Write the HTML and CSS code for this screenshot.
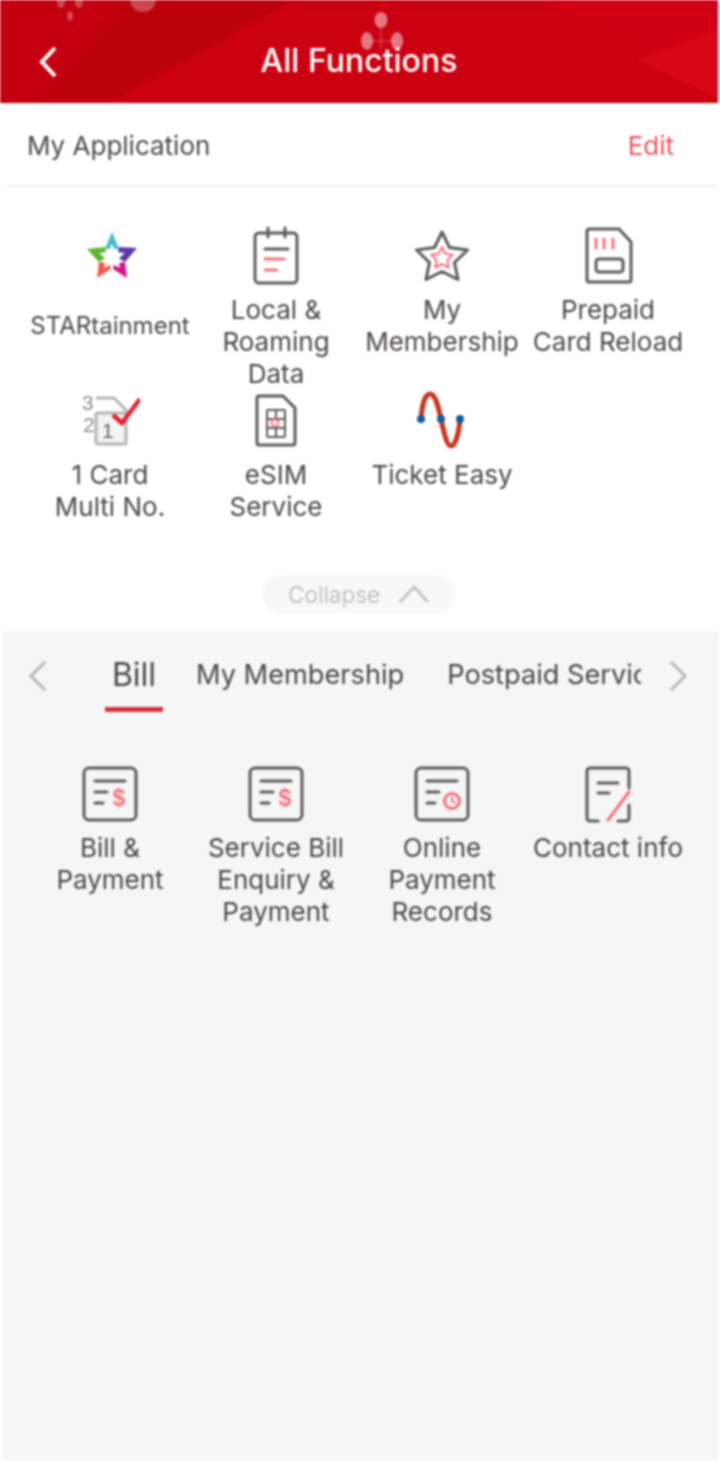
FILE: index.html
```html
<!DOCTYPE html>
<html lang="en">
<head>
<meta charset="utf-8">
<title>All Functions</title>
<link rel="stylesheet" href="styles.css">
</head>
<body>
<div class="page">
  <header class="topbar">
    <svg class="topbar-art" viewBox="0 0 718 103" preserveAspectRatio="none" aria-hidden="true">
      <polygon points="0,0 295,0 108,103 0,103" fill="#c40010"/>
      <polygon points="130,0 293,0 108,103 36,103" fill="#b9000c" opacity=".7"/>
      <polygon points="295,0 718,0 718,103 108,103" fill="#cb0011"/>
      <polygon points="541,0 718,0 718,90" fill="#d20014"/>
      <polygon points="718,30 637,60 718,98" fill="#d90619"/>
      <g fill="#f0a8b0" opacity=".7">
        <ellipse cx="381" cy="20" rx="6.500" ry="8"/>
        <ellipse cx="367" cy="41" rx="6" ry="9"/>
        <ellipse cx="397" cy="41" rx="6" ry="9"/>
      </g>
      <path d="M381 28v22M367 41h30" stroke="#f0a8b0" stroke-width="1" opacity=".5" fill="none"/>
      <g fill="#e08a92" opacity=".5">
        <ellipse cx="61" cy="2" rx="4" ry="6"/>
        <ellipse cx="79" cy="2" rx="4" ry="6"/>
        <ellipse cx="70" cy="16" rx="3" ry="5"/>
        <ellipse cx="143" cy="0" rx="13" ry="12"/>
      </g>
    </svg>
    <a class="back" aria-label="Back">
      <svg width="22" height="34" viewBox="0 0 22 34"><path d="M18 3 5 17l13 14" class="chev-white"/></svg>
    </a>
    <h1 class="title">All Functions</h1>
  </header>

  <section class="apps">
    <div class="apps-head">
      <span class="apps-title">My Application</span>
      <a class="edit">Edit</a>
    </div>
    <div class="grid grid-apps">
      <div class="item">
        <svg class="icon" viewBox="0 0 60 60">
          <polygon points="32,6 39,23 25,23" fill="#46b9c8"/>
          <polygon points="7,23 25,21 27,31 19,36" fill="#5cb52f"/>
          <polygon points="57,22 39,21 37,31 45,36" fill="#5a3aa0"/>
          <polygon points="17,52 19,36 30,38 31,43" fill="#ec5a48"/>
          <polygon points="47,52 45,36 34,38 33,43" fill="#d6128a"/>
          <polygon points="32,18 36,26 45,27 38,33 40,42 32,38 24,42 26,33 19,27 28,26" fill="#fff"/>
        </svg>
        <span class="label label-small">STARtainment</span>
      </div>
      <div class="item">
        <svg class="icon" viewBox="0 0 60 60">
          <rect x="9" y="7" width="42" height="50" rx="4" class="ln"/>
          <path d="M22 2v9M39 2v9M19 23h23" class="ln"/>
          <path d="M19 33h19M19 44h12" class="pk"/>
        </svg>
        <span class="label">Local &amp;<br>Roaming<br>Data</span>
      </div>
      <div class="item">
        <svg class="icon" viewBox="0 0 60 60">
          <path d="M30 6l7.500 15.500 18 2.500-13 12.500 3.500 17L30 45.500 14 53.500l3.500-17L4.500 24l18-2.500z" class="ln round"/>
          <path d="M30 21l3.300 6.800 7.500 1-5.400 5.200 1.300 7.500L30 38l-6.700 3.500 1.300-7.500-5.400-5.200 7.500-1z" class="pk thin round"/>
        </svg>
        <span class="label">My<br>Membership</span>
      </div>
      <div class="item">
        <svg class="icon" viewBox="0 0 60 60">
          <path d="M11 3h30l12 13v38a2 2 0 0 1-2 2H11a2 2 0 0 1-2-2V5a2 2 0 0 1 2-2z" class="ln round"/>
          <path d="M18 13v9M26 13v9M35 13v9" class="pk"/>
          <rect x="18" y="33" width="27" height="13" rx="3" class="ln"/>
        </svg>
        <span class="label">Prepaid<br>Card Reload</span>
      </div>
      <div class="item">
        <svg class="icon" viewBox="0 0 60 60">
          <path d="M16 7h18l12 12v12" class="ln-light"/>
          <rect x="16" y="22" width="30" height="31" rx="2" class="sim-front"/>
          <text x="2" y="19" class="num">3</text>
          <text x="3" y="41" class="num">2</text>
          <text x="22" y="47" class="num num-dark">1</text>
          <path d="M33 24l9 8 18-24" class="check"/>
        </svg>
        <span class="label">1 Card<br>Multi No.</span>
      </div>
      <div class="item">
        <svg class="icon" viewBox="0 0 60 60">
          <path d="M13 5h24l12 12v35a2 2 0 0 1-2 2H13a2 2 0 0 1-2-2V7a2 2 0 0 1 2-2z" class="ln round"/>
          <rect x="21" y="19" width="18" height="27" rx="1" class="ln thin"/>
          <path d="M21 28h18M21 37h18M30 19v8M30 38v8" class="ln thin"/>
          <circle cx="29" cy="32" r="3.500" class="pk thin"/>
        </svg>
        <span class="label">eSIM<br>Service</span>
      </div>
      <div class="item">
        <svg class="icon" viewBox="0 0 60 60">
          <path d="M9 28C10 14 13 3 18 3s8 11 11 25 6 27 10 27 8-12 9-27" class="wave"/>
          <circle cx="9" cy="28" r="4" fill="#0f5a9a"/>
          <circle cx="29" cy="28" r="4" fill="#0f5a9a"/>
          <circle cx="48" cy="28" r="4" fill="#0f5a9a"/>
        </svg>
        <span class="label">Ticket Easy</span>
      </div>
    </div>
    <div class="collapse-row">
      <button class="collapse" type="button">
        <span>Collapse</span>
        <svg width="32" height="20" viewBox="0 0 32 20"><path d="M2 18 16 3l14 15" class="chev-light"/></svg>
      </button>
    </div>
  </section>

  <section class="services">
    <nav class="tabs">
      <svg class="tab-arrow" width="20" height="32" viewBox="0 0 20 32"><path d="M17 2 3 16l14 14" class="chev-grey"/></svg>
      <div class="tab-scroll">
        <a class="tab tab-active">Bill</a>
        <a class="tab">My Membership</a>
        <a class="tab">Postpaid Service</a>
      </div>
      <svg class="tab-arrow" width="20" height="32" viewBox="0 0 20 32"><path d="M3 2l14 14L3 30" class="chev-grey"/></svg>
    </nav>
    <div class="grid grid-services">
      <div class="item">
        <svg class="icon" viewBox="0 0 60 60">
          <rect x="4" y="4" width="52" height="52" rx="5" class="ln"/>
          <path d="M15 17h30M15 28h12M15 39h8" class="ln"/>
          <text x="39" y="42" class="dollar">$</text>
        </svg>
        <span class="label">Bill &amp;<br>Payment</span>
      </div>
      <div class="item">
        <svg class="icon" viewBox="0 0 60 60">
          <rect x="4" y="4" width="52" height="52" rx="5" class="ln"/>
          <path d="M15 17h30M15 28h12M15 39h8" class="ln"/>
          <text x="39" y="42" class="dollar">$</text>
        </svg>
        <span class="label">Service Bill<br>Enquiry &amp;<br>Payment</span>
      </div>
      <div class="item">
        <svg class="icon" viewBox="0 0 60 60">
          <rect x="4" y="4" width="52" height="52" rx="5" class="ln"/>
          <path d="M15 17h30M15 28h12M15 39h8" class="ln"/>
          <circle cx="40" cy="37" r="7.500" class="pk"/>
          <path d="M40 33v4l3 2" class="pk thin"/>
        </svg>
        <span class="label">Online<br>Payment<br>Records</span>
      </div>
      <div class="item">
        <svg class="icon" viewBox="0 0 60 60">
          <path d="M51 24V7a3 3 0 0 0-3-3H12a3 3 0 0 0-3 3v47a3 3 0 0 0 3 3h8M40 57h8a3 3 0 0 0 3-3V41" class="ln"/>
          <path d="M20 19h20M20 29h11" class="ln"/>
          <path d="M30 56l21-28" class="pk"/>
        </svg>
        <span class="label">Contact info</span>
      </div>
    </div>
  </section>
</div>
</body>
</html>
```
FILE: styles.css
```css
* { box-sizing: border-box; }
html, body { margin: 0; padding: 0; background: #fff; }
body { font-family: Inter, "Liberation Sans", sans-serif; color: #4d484a; }

.page {
  width: 720px;
  height: 1461px;
  display: flex;
  flex-direction: column;
  overflow: hidden;
  filter: blur(0.8px);
}

.topbar {
  position: relative;
  width: 718px;
  height: 103px;
  flex: none;
  background: #cb0011;
  display: flex;
  align-items: flex-end;
  justify-content: center;
  padding-bottom: 24px;
}
.topbar-art { position: absolute; inset: 0; width: 100%; height: 100%; }
.back { position: absolute; left: 37px; top: 45px; line-height: 0; }
.title {
  position: relative;
  margin: 0;
  font-size: 32px;
  line-height: 36px;
  font-weight: 500;
  color: #fff;
}

.apps { flex: none; height: 529px; display: flex; flex-direction: column; }
.apps-head {
  height: 84px;
  margin: 0 2px 0 4px;
  padding: 3px 44px 0 23px;
  border-bottom: 2px solid #f1f1f1;
  display: flex;
  align-items: center;
  justify-content: space-between;
  font-size: 26px;
}
.apps-title { color: #4d484a; }
.edit { color: #e5555e; }

.grid {
  display: grid;
  grid-template-columns: repeat(4, 166px);
}
.grid-apps { padding-left: 27px; margin-top: 39px; grid-auto-rows: 165px; height: 330px; }
.grid-services { padding-left: 24px; margin-top: 50px; }

.item { display: flex; flex-direction: column; align-items: center; text-align: center; }
.icon { width: 60px; height: 60px; flex: none; margin-bottom: 8px; }
.label { font-size: 26px; line-height: 32px; color: #4d484a; white-space: nowrap; }
.label-small { font-size: 24px; margin-top: 16px; }

.collapse-row { display: flex; justify-content: center; margin-top: 19px; }
.collapse {
  width: 192px;
  height: 38px;
  margin-left: -2px;
  border: 0;
  border-radius: 19px;
  background: #f8f8f8;
  color: #c4c2c3;
  font: inherit;
  font-size: 22.500px;
  display: flex;
  align-items: center;
  justify-content: flex-start;
  gap: 18px;
  padding: 0 0 0 25px;
}

.services { flex: 1; margin: 0 2px 0 3px; background: #f6f6f6; }
.tabs {
  height: 82px;
  display: flex;
  align-items: flex-start;
  padding: 28px 0 0 25px;
}
.tab-arrow { flex: none; }
.tab-scroll {
  width: 536px;
  margin: -28px 27px 0 57px;
  height: 82px;
  display: flex;
  gap: 43px;
  overflow: hidden;
  white-space: nowrap;
}
.tab {
  flex: none;
  font-size: 27.200px;
  line-height: 86px;
  color: #4d484a;
  height: 80px;
}
.tab-active {
  width: 58px;
  margin-right: -10px;
  text-align: center;
  font-size: 32px;
  border-bottom: 5px solid #d9323a;
}

.ln, .ln-light, .pk, .chev-white, .chev-light, .chev-grey, .check, .wave { fill: none; }
.ln { stroke: #5b5b5b; stroke-width: 3; stroke-linecap: round; }
.ln-light { stroke: #b4b4b4; stroke-width: 3; }
.sim-front { fill: #f4f4f4; stroke: #b4b4b4; stroke-width: 3; }
.pk { stroke: #f8717e; stroke-width: 3; stroke-linecap: round; }
.thin { stroke-width: 2; }
.round { stroke-linejoin: round; }
.check { stroke: #e3202e; stroke-width: 4.500; }
.wave { stroke: #c8341f; stroke-width: 5; stroke-linecap: round; }
.num { font-size: 21px; fill: #8a8a8a; font-family: "Liberation Sans", sans-serif; }
.num-dark { fill: #666; }
.dollar { font-size: 23px; font-weight: 700; fill: #f8717e; text-anchor: middle; font-family: "Liberation Sans", sans-serif; }
.chev-white { stroke: #fff; stroke-width: 4; }
.chev-light { stroke: #c4c4c4; stroke-width: 3; }
.chev-grey { stroke: #b8b8b8; stroke-width: 3; }
```
